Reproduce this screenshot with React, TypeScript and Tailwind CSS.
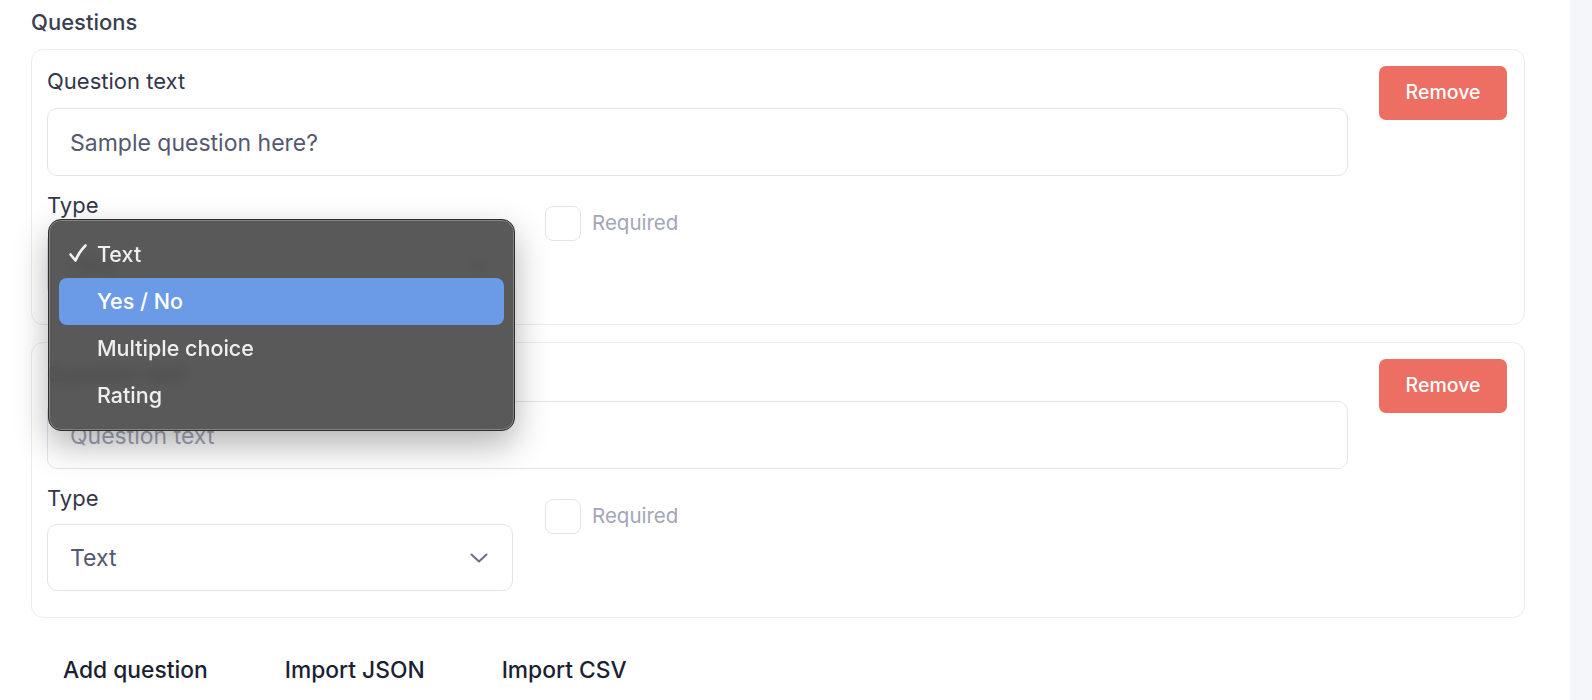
import React from "react";

const QUESTION_TYPES = ["Text", "Yes / No", "Multiple choice", "Rating"];

interface QuestionCardProps {
  value: string;
  placeholder: string;
  type: string;
  menuOpen?: boolean;
}

function Chevron() {
  return (
    <svg width="18" height="10" viewBox="0 0 18 10" fill="none">
      <path d="M1.5 1.5 L9 8.5 L16.5 1.5" stroke="#6b6e86" strokeWidth="2" strokeLinecap="round" strokeLinejoin="round" />
    </svg>
  );
}

function Check() {
  return (
    <svg width="20" height="20" viewBox="0 0 20 20" fill="none">
      <path d="M2.5 11.5 L7.5 17.5 Q11 9 17.5 2.5" stroke="#f2f2f2" strokeWidth="2.6" strokeLinecap="round" strokeLinejoin="round" />
    </svg>
  );
}

function TypeMenu({ selected, highlighted }: { selected: string; highlighted: string }) {
  return (
    <div className="absolute left-[1px] top-[-12px] z-10 w-[467px] rounded-[13px] border border-[#2e2e2e] bg-[#474747]/90 py-[11px] shadow-[0_14px_34px_rgba(0,0,0,0.3),inset_0_0_0_1px_rgba(255,255,255,0.25)] backdrop-blur-[6px]">
      {QUESTION_TYPES.map((t) => (
        <div
          key={t}
          className={`relative mx-[10px] flex h-[47px] items-center rounded-[8px] pl-[38px] text-[21.5px] font-medium ${
            t === highlighted ? "bg-[#6b9be6] text-white" : "text-[#efefef]"
          }`}
        >
          {t === selected && (
            <span className="absolute left-[9px] top-[12px]">
              <Check />
            </span>
          )}
          {t}
        </div>
      ))}
    </div>
  );
}

function QuestionCard({ value, placeholder, type, menuOpen }: QuestionCardProps) {
  return (
    <div className="flex items-start gap-[31px] rounded-[12px] border border-[#ececf1] pb-[26px] pl-[15px] pr-[17px] pt-[16px]">
      <div className="flex-1">
        <div className="h-[28px] text-[22px] leading-[30px] text-[#343749]">Question text</div>
        <input
          className="mt-[14px] h-[68px] w-full rounded-[10px] border border-[#e4e4eb] px-[22px] pt-[2px] text-[23px] text-[#555870] outline-none placeholder:text-[#a3a6b8]"
          defaultValue={value}
          placeholder={placeholder}
        />
        <div className="mt-[14px] flex items-start gap-[32px]">
          <div className="w-[466px]">
            <div className="h-[28px] text-[22px] leading-[30px] text-[#343749]">Type</div>
            <div className="relative mt-[13px]">
              <div className="flex h-[67px] items-center justify-between rounded-[10px] border border-[#e4e4eb] pl-[22px] pr-[24px] text-[23px] text-[#555870]">
                <span className="pt-[2px]">{type}</span>
                <Chevron />
              </div>
              {menuOpen && <TypeMenu selected={type} highlighted="Yes / No" />}
            </div>
          </div>
          <label className="mt-[16px] flex items-center gap-[11px]">
            <span className="h-[35px] w-[36px] rounded-[8px] border border-[#e3e3ea] bg-white" />
            <span className="text-[20.5px] text-[#a3a6b8]">Required</span>
          </label>
        </div>
      </div>
      <button className="h-[54px] w-[128px] rounded-[7px] bg-[#ed6e63] text-[19.5px] font-medium text-white">
        Remove
      </button>
    </div>
  );
}

export default function App() {
  return (
    <div className="flex h-[700px] w-full overflow-hidden bg-white font-['Inter',sans-serif]">
      <div className="flex-1 pl-[31px] pr-[45px] pt-[8px]">
        {/* Questions */}
        <div className="h-[28px] text-[22px] font-medium leading-[28px] text-[#3b3e51]">Questions</div>
        <div className="mt-[13px] flex flex-col gap-[17px]">
          <QuestionCard value="Sample question here?" placeholder="Question text" type="Text" menuOpen />
          <QuestionCard value="" placeholder="Question text" type="Text" />
        </div>

        {/* Actions */}
        <div className="mt-[25px] flex gap-[13px]">
          <button className="h-[54px] px-[32px] text-[22.8px] font-medium text-[#1c1f33]">Add question</button>
          <button className="h-[54px] px-[32px] text-[22.8px] font-medium text-[#1c1f33]">Import JSON</button>
          <button className="h-[54px] px-[32px] text-[22.8px] font-medium text-[#1c1f33]">Import CSV</button>
        </div>
      </div>
      <div className="w-[22px] bg-[#f5f6f9]" />
    </div>
  );
}
